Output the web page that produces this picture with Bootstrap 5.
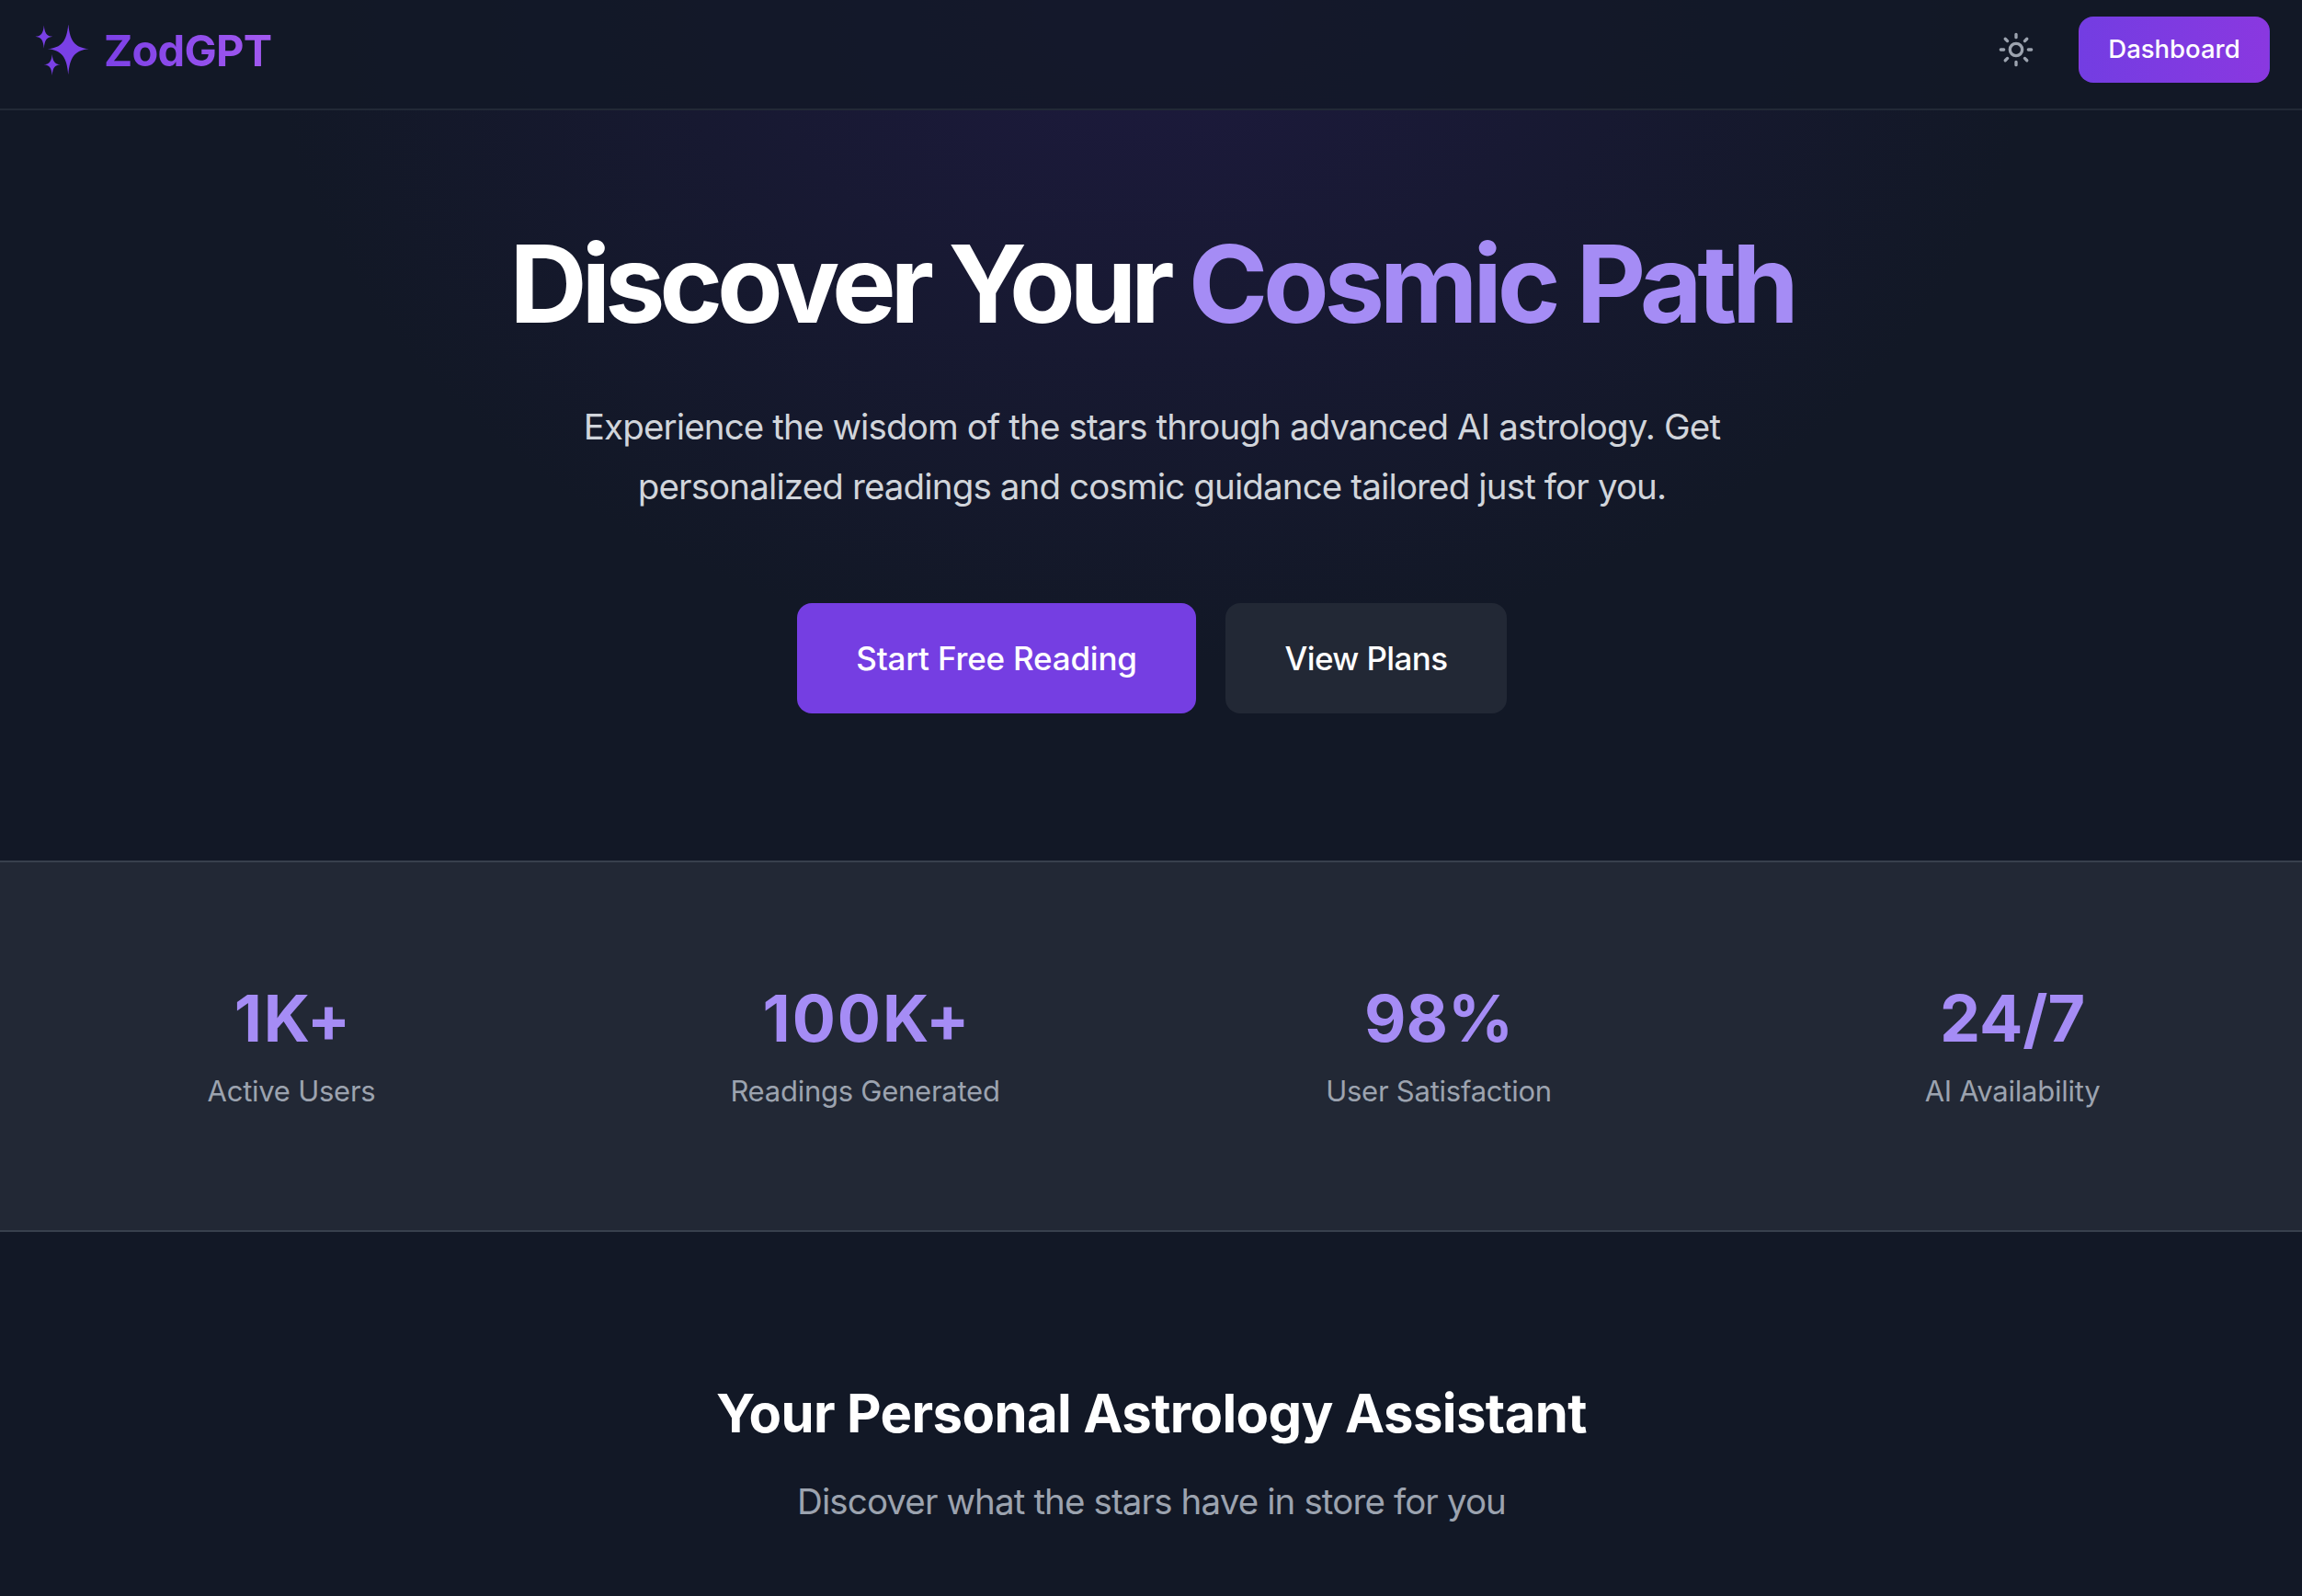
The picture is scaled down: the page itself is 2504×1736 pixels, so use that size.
<!DOCTYPE html>
<html lang="en">
<head>
  <meta charset="UTF-8" />
  <meta name="viewport" content="width=device-width, initial-scale=1" />
  <title>ZodGPT</title>
  <link href="https://cdn.jsdelivr.net/npm/bootstrap@5.3.0/dist/css/bootstrap.min.css" rel="stylesheet" />
  <style>
    body {
      background: #121826;
      color: #fff;
      font-family: Inter, "Liberation Sans", sans-serif;
    }
    .page {
      height: 1736px;
      background: radial-gradient(ellipse 960px 720px at 50% 0, #1d1a3e 0%, #121826 100%) no-repeat;
    }
    .site-nav {
      height: 120px;
      padding: 0 35px 10px 36px;
      background: rgba(18, 24, 38, .78);
      border-bottom: 2px solid #222936;
    }
    .brand-icon { width: 60px; height: 56px; margin: 1px 16px 0 1px; fill: #7a40e6; }
    .brand-name {
      font-size: 47px;
      font-weight: 700;
      line-height: 1;
      letter-spacing: -.75px;
      color: transparent;
      background: linear-gradient(90deg, #7c40e6, #a259f0);
      background-clip: text;
      -webkit-background-clip: text;
    }
    .theme-icon { width: 40px; height: 40px; margin-right: 48px; stroke: #9ca3af; }
    .btn-dash {
      width: 208px;
      height: 72px;
      border-radius: 16px;
      font-size: 27.5px;
      font-weight: 500;
      color: #fff;
      background: linear-gradient(90deg, #733de2, #8a38e0);
    }
    .hero { height: 816px; padding: 130px 0 0 2px; }
    .hero-title {
      margin-bottom: 65px;
      font-size: 117px;
      font-weight: 700;
      line-height: 1;
      letter-spacing: -6.25px;
    }
    .accent { color: #a58cf5; }
    .hero-title .accent { letter-spacing: -5.3px; }
    .hero-text {
      margin-bottom: 94px;
      font-size: 38.5px;
      line-height: 65px;
      letter-spacing: -.87px;
      color: #d1d5db;
    }
    .hero-actions { gap: 32px; }
    .btn-hero {
      height: 120px;
      border-radius: 16px;
      font-size: 35px;
      font-weight: 500;
      letter-spacing: -.2px;
      color: #fff;
    }
    .btn-start { width: 434px; background: #753ee2; }
    .btn-plans { width: 306px; background: #222835; letter-spacing: -.6px; }
    .stats {
      height: 404px;
      padding: 130px 35px 0 37px;
      gap: 64px;
      background: #222835;
      border-top: 2px solid #38404d;
      border-bottom: 2px solid #38404d;
    }
    .stat-value { margin-bottom: 15px; font-size: 70px; font-weight: 700; line-height: 80px; }
    .stat-wide { padding-left: 4px; letter-spacing: 2px; }
    .stat-label { font-size: 31px; line-height: 48px; letter-spacing: -.25px; color: #9ca3af; }
    .assist { padding: 157px 0 0 1px; }
    .assist-title {
      margin-bottom: 28px;
      font-size: 58px;
      font-weight: 700;
      line-height: 80px;
      letter-spacing: -.6px;
    }
    .assist-text { font-size: 38.5px; line-height: 56px; letter-spacing: -.88px; color: #9ca3af; }
  </style>
</head>
<body>
  <div class="page overflow-hidden">
    <nav class="site-nav d-flex align-items-center justify-content-between">
      <div class="d-flex align-items-center">
        <svg class="brand-icon" viewBox="37 26 60 56">
          <defs>
            <path id="star" d="M0-27C1.7-8.5 7-1.5 22.5 0C7 1.5 1.7 8.5 0 28C-1.7 8.5-7 1.5-22.5 0C-7-1.5-1.7-8.5 0-27Z" />
          </defs>
          <use href="#star" transform="translate(74.3 52.3)" />
          <use href="#star" transform="translate(47.8 38.8) scale(.42 .46)" />
          <use href="#star" transform="translate(56.7 69.3) scale(.4 .42)" />
        </svg>
        <span class="brand-name">ZodGPT</span>
      </div>
      <div class="d-flex align-items-center">
        <svg class="theme-icon" viewBox="0 0 24 24" fill="none" stroke-width="2" stroke-linecap="round">
          <circle cx="12" cy="12" r="4" />
          <path d="M12 2v2M12 20v2M4.93 4.93l1.41 1.41M17.66 17.66l1.41 1.41M2 12h2M20 12h2M6.34 17.66l-1.41 1.41M19.07 4.93l-1.41 1.41" />
        </svg>
        <button class="btn btn-dash">Dashboard</button>
      </div>
    </nav>

    <section class="hero text-center">
      <h1 class="hero-title">Discover Your <span class="accent">Cosmic Path</span></h1>
      <p class="hero-text">Experience the wisdom of the stars through advanced AI astrology. Get<br />personalized readings and cosmic guidance tailored just for you.</p>
      <div class="hero-actions d-flex justify-content-center">
        <button class="btn btn-hero btn-start">Start Free Reading</button>
        <button class="btn btn-hero btn-plans">View Plans</button>
      </div>
    </section>

    <section class="stats d-flex text-center">
      <div class="col">
        <div class="stat-value stat-wide accent">1K+</div>
        <div class="stat-label">Active Users</div>
      </div>
      <div class="col">
        <div class="stat-value stat-wide accent">100K+</div>
        <div class="stat-label">Readings Generated</div>
      </div>
      <div class="col">
        <div class="stat-value accent">98%</div>
        <div class="stat-label">User Satisfaction</div>
      </div>
      <div class="col">
        <div class="stat-value accent">24/7</div>
        <div class="stat-label">AI Availability</div>
      </div>
    </section>

    <section class="assist text-center">
      <h2 class="assist-title">Your Personal Astrology Assistant</h2>
      <p class="assist-text mb-0">Discover what the stars have in store for you</p>
    </section>
  </div>
  <script src="https://cdn.jsdelivr.net/npm/bootstrap@5.3.0/dist/js/bootstrap.bundle.min.js"></script>
</body>
</html>
